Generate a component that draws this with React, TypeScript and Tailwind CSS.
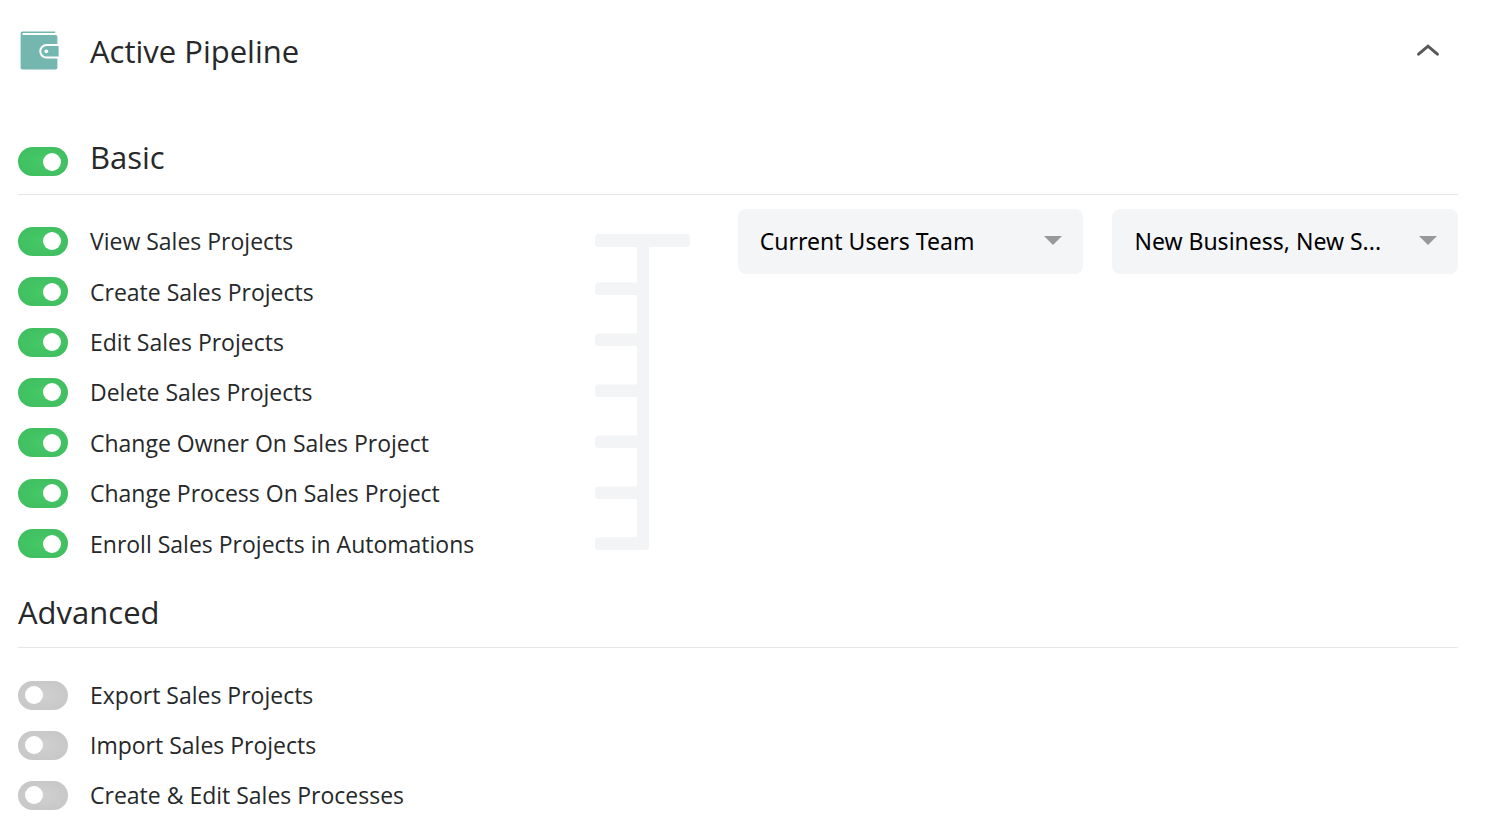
import { useState } from "react";

const basicPermissions = [
  "View Sales Projects",
  "Create Sales Projects",
  "Edit Sales Projects",
  "Delete Sales Projects",
  "Change Owner On Sales Project",
  "Change Process On Sales Project",
  "Enroll Sales Projects in Automations",
];

const advancedPermissions = [
  "Export Sales Projects",
  "Import Sales Projects",
  "Create & Edit Sales Processes",
];

const toId = (label: string) => label.toLowerCase().replace(/[^a-z]+/g, "-");

function Toggle({ id, defaultOn }: { id: string; defaultOn: boolean }) {
  return (
    <input
      id={id}
      type="checkbox"
      role="switch"
      defaultChecked={defaultOn}
      className="flex h-[29px] w-[50px] shrink-0 cursor-pointer appearance-none items-center rounded-full bg-[radial-gradient(#d0d0d0,#c5c5c5)] pl-[7px] before:size-[18px] before:rounded-full before:bg-white before:content-[''] checked:bg-[radial-gradient(#45c967,#3fbc5f)] checked:pl-[25px]"
    />
  );
}

function PermissionRow({ label, defaultOn }: { label: string; defaultOn: boolean }) {
  const id = toId(label);
  return (
    <li className="flex items-center gap-[22px]">
      <Toggle id={id} defaultOn={defaultOn} />
      <label htmlFor={id} className="text-[23px] leading-[32px] whitespace-nowrap">
        {label}
      </label>
    </li>
  );
}

function WalletIcon() {
  return (
    <svg className="h-[40px] w-[40px] shrink-0" viewBox="0 0 40 40" aria-hidden="true">
      <path
        fill="#74b7b0"
        d="M2.6 0.6H35.2V2H3.4Q2.4 2 2.4 3T3.4 4H35.4Q37.4 4 37.4 6V36.4Q37.4 38.4 35.4 38.4H2.6Q0.6 38.4 0.6 36.4V2.6Q0.6 0.6 2.6 0.6Z"
      />
      <path fill="#fff" d="M39 13.1H26.5A7.2 7.2 0 0 0 26.5 27.5H39Z" />
      <path fill="#74b7b0" d="M38.6 15.1H26.5A5.2 5.2 0 0 0 26.5 25.5H38.6Z" />
      <circle cx="26.3" cy="20.3" r="1.9" fill="#fff" />
    </svg>
  );
}

function Connector() {
  return (
    <svg className="mt-[39px] mr-[48px] h-[316px] w-[95px] shrink-0" viewBox="0 0 95 316" fill="#f3f4f6" aria-hidden="true">
      <rect x="0" y="0" width="95" height="13" rx="4" />
      {[48.5, 99.5, 150.5, 201.5, 252.5, 303.3].map((y) => (
        <rect key={y} x="0" y={y} width="54" height="12.6" rx="3.5" />
      ))}
      <rect x="42" y="4" width="12" height="310" />
    </svg>
  );
}

function ScopeSelect({ label, value, options }: { label: string; value: string; options: string[] }) {
  return (
    <div className="mt-[14px] grid w-[24%] shrink-0 items-center">
      <select
        aria-label={label}
        defaultValue={value}
        className="col-start-1 row-start-1 h-[65px] w-full appearance-none truncate rounded-[8px] bg-[#f4f5f7] pr-[60px] pl-[22px] font-['Noto_Sans',sans-serif] text-[23px] text-black"
      >
        {options.map((option) => (
          <option key={option}>{option}</option>
        ))}
      </select>
      <svg
        className="pointer-events-none col-start-1 row-start-1 mr-[21px] mb-[2px] h-[9px] w-[18px] justify-self-end"
        viewBox="0 0 18 9"
        aria-hidden="true"
      >
        <path d="M0 0H18L9 9Z" fill="#999" />
      </svg>
    </div>
  );
}

export default function App() {
  const [open, setOpen] = useState(true);

  return (
    <main className="min-h-screen bg-white pt-[23px] pr-[32px] pb-[18px] pl-[18px] font-['Open_Sans',sans-serif] text-[#26282a]">
      <header className="flex h-[56px] items-center gap-[30px] pl-[2px]">
        <WalletIcon />
        <h1 className="flex-1 text-[31px] leading-[40px]">Active Pipeline</h1>
        <button
          type="button"
          aria-label="Toggle Active Pipeline"
          aria-expanded={open}
          onClick={() => setOpen(!open)}
          className="cursor-pointer px-[18px] py-[8px]"
        >
          <svg className="h-[14px] w-[24px]" viewBox="0 0 24 14" fill="none" stroke="#58595b" strokeWidth="3" aria-hidden="true">
            <path d="M2.6 10.2L12 2.2L21.4 10.2" strokeLinecap="round" />
          </svg>
        </button>
      </header>

      {open && (
        <>
          <section className="mt-[59px]">
            <div className="flex items-end gap-[22px] border-b border-[#e6e7e8] pb-[18px]">
              <Toggle id="basic" defaultOn />
              <h2 className="text-[31px] leading-[38px]">
                <label htmlFor="basic">Basic</label>
              </h2>
            </div>
            <div className="flex items-start">
              <ul className="mt-[21px] grid h-[353px] flex-1 auto-rows-fr">
                {basicPermissions.map((label) => (
                  <PermissionRow key={label} label={label} defaultOn />
                ))}
              </ul>
              <Connector />
              <ScopeSelect
                label="Team scope"
                value="Current Users Team"
                options={["Current Users Team"]}
              />
              <div className="w-[29px] shrink-0" />
              <ScopeSelect
                label="Processes"
                value="New Business, New S..."
                options={["New Business, New S..."]}
              />
            </div>
          </section>

          <section className="mt-[25px]">
            <h2 className="border-b border-[#e6e7e8] pb-[17px] text-[31px] leading-[36px]">Advanced</h2>
            <ul className="mt-[22px] grid auto-rows-[50px]">
              {advancedPermissions.map((label) => (
                <PermissionRow key={label} label={label} defaultOn={false} />
              ))}
            </ul>
          </section>
        </>
      )}
    </main>
  );
}
